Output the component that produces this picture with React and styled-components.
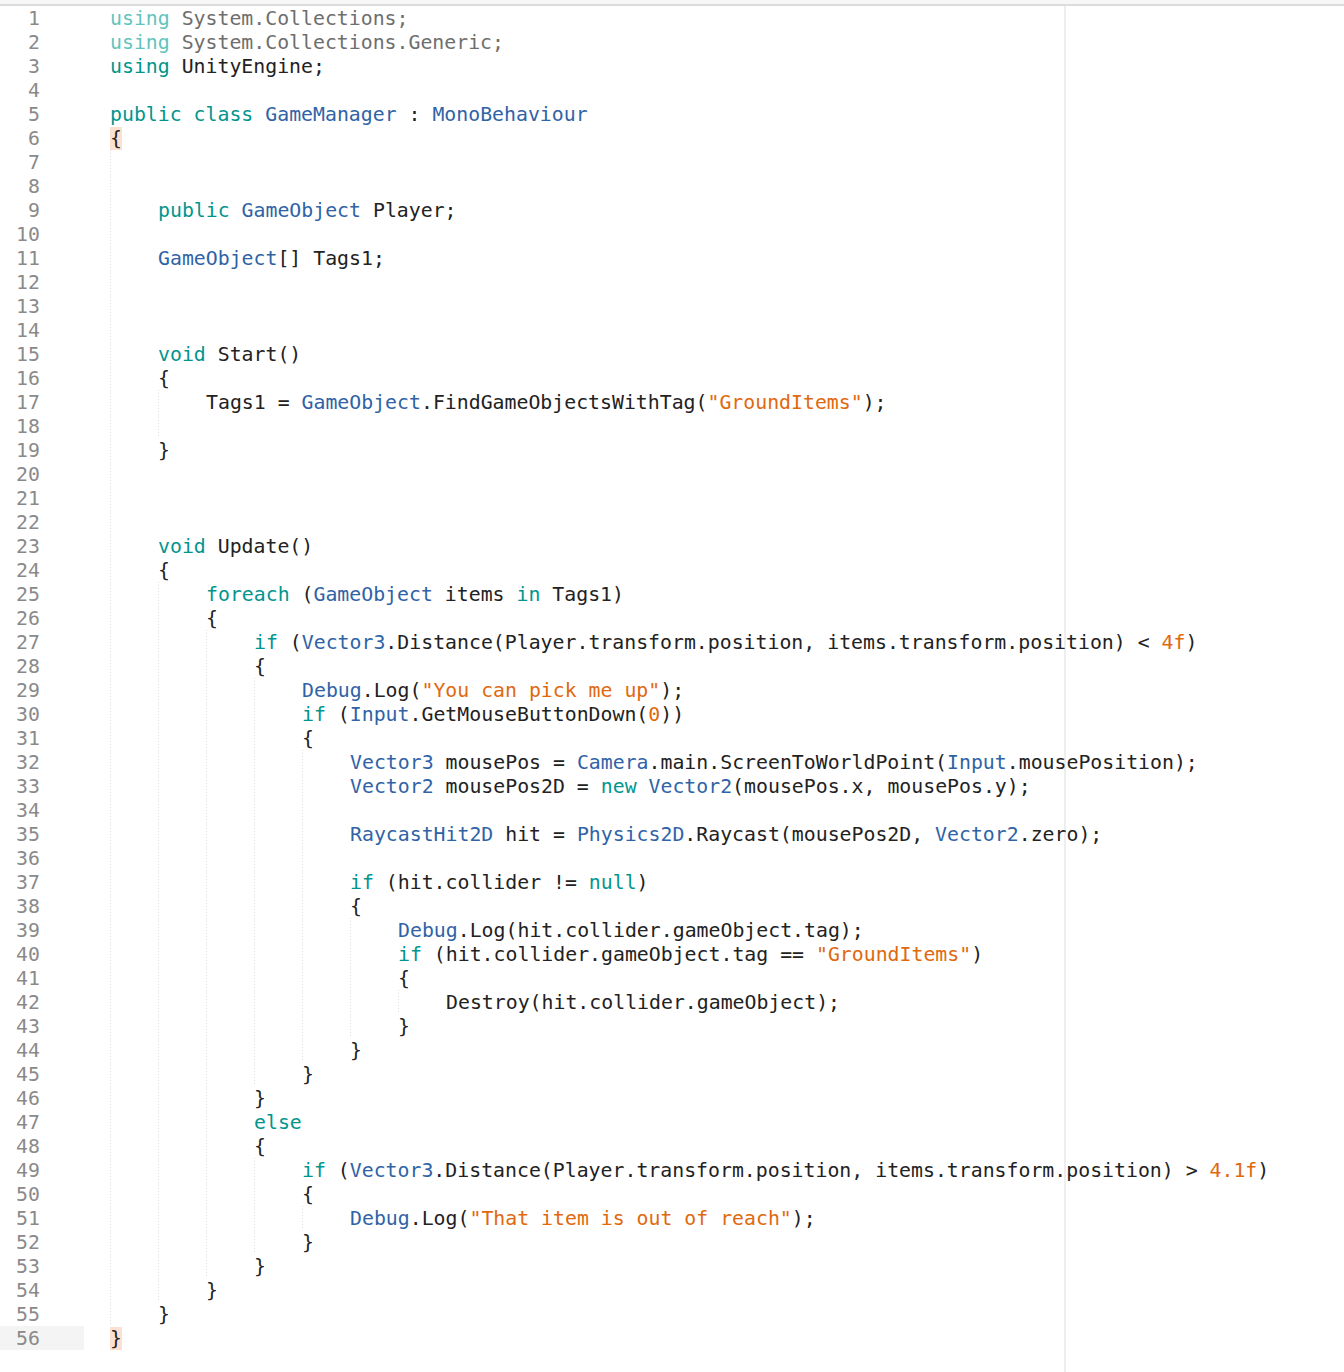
import React from 'react';
import styled, { createGlobalStyle } from 'styled-components';

const source = `using System.Collections;
using System.Collections.Generic;
using UnityEngine;

public class GameManager : MonoBehaviour
{


    public GameObject Player;

    GameObject[] Tags1;



    void Start()
    {
        Tags1 = GameObject.FindGameObjectsWithTag("GroundItems");

    }



    void Update()
    {
        foreach (GameObject items in Tags1)
        {
            if (Vector3.Distance(Player.transform.position, items.transform.position) < 4f)
            {
                Debug.Log("You can pick me up");
                if (Input.GetMouseButtonDown(0))
                {
                    Vector3 mousePos = Camera.main.ScreenToWorldPoint(Input.mousePosition);
                    Vector2 mousePos2D = new Vector2(mousePos.x, mousePos.y);

                    RaycastHit2D hit = Physics2D.Raycast(mousePos2D, Vector2.zero);

                    if (hit.collider != null)
                    {
                        Debug.Log(hit.collider.gameObject.tag);
                        if (hit.collider.gameObject.tag == "GroundItems")
                        {
                            Destroy(hit.collider.gameObject);
                        }
                    }
                }
            }
            else
            {
                if (Vector3.Distance(Player.transform.position, items.transform.position) > 4.1f)
                {
                    Debug.Log("That item is out of reach");
                }
            }
        }
    }
}`;

const keywords = ['using', 'public', 'class', 'void', 'foreach', 'in', 'if', 'else', 'new', 'null'];
const types = [
  'GameManager', 'MonoBehaviour', 'GameObject', 'Vector3', 'Vector2', 'Debug',
  'Input', 'Camera', 'RaycastHit2D', 'Physics2D',
];

// split a line into coloured tokens
const tokenize = (text, lineNo) => {
  if (lineNo <= 2) {
    return [
      { kind: 'kwDim', text: 'using' },
      { kind: 'dim', text: text.slice(5) },
    ];
  }
  const out = [];
  const re = /("[^"]*")|(\b\d+(?:\.\d+)?f?\b)|([A-Za-z_][A-Za-z0-9_]*)|([^A-Za-z0-9_"]+)/g;
  let m;
  while ((m = re.exec(text))) {
    if (m[1]) out.push({ kind: 'str', text: m[1] });
    else if (m[2]) out.push({ kind: 'str', text: m[2] });
    else if (m[3]) {
      const w = m[3];
      if (keywords.includes(w)) out.push({ kind: 'kw', text: w });
      else if (types.includes(w)) out.push({ kind: 'type', text: w });
      else out.push({ kind: 'plain', text: w });
    } else out.push({ kind: 'plain', text: m[4] });
  }
  return out;
};

// work out indent guides: columns of every open block
const buildLines = () => {
  const raw = source.split('\n');
  const stack = [];
  return raw.map((line, i) => {
    const trimmed = line.trim();
    const indent = line.length - line.trimStart().length;
    if (trimmed.startsWith('}')) stack.pop();
    const guides = [...stack];
    if (trimmed.startsWith('{')) stack.push(indent);
    const units = Math.max(Math.floor(indent / 4), guides.length);
    return {
      no: i + 1,
      units,
      guides,
      tokens: tokenize(line.slice(Math.min(units * 4, indent)), i + 1),
      matched: i === 5 || i === raw.length - 1,
    };
  });
};

const lines = buildLines();
const activeLine = lines.length;

const App = () => (
  <>
    <GlobalStyle />
    <Editor>
      <TopBar />
      <Body>
        <Gutter>
          {lines.map((l) => (
            <LineNumber key={l.no} $active={l.no === activeLine}>
              {l.no}
            </LineNumber>
          ))}
        </Gutter>
        <Code>
          {lines.map((l) => (
            <CodeLine key={l.no}>
              {Array.from({ length: l.units }).map((_, u) => (
                <Indent key={u} $guide={l.guides.includes(u * 4)} />
              ))}
              {l.tokens.map((t, k) =>
                l.matched && /^[{}]$/.test(t.text.trim()) ? (
                  <Match key={k}>{t.text}</Match>
                ) : (
                  <Token key={k} $kind={t.kind}>
                    {t.text}
                  </Token>
                )
              )}
            </CodeLine>
          ))}
        </Code>
      </Body>
    </Editor>
  </>
);

const GlobalStyle = createGlobalStyle`
  html, body {
    margin: 0;
    padding: 0;
    background: #ffffff;
  }
`;

const Editor = styled.div`
  min-height: 100vh;
  display: flex;
  flex-direction: column;
  font-family: 'DejaVu Sans Mono', 'Liberation Mono', monospace;
  font-size: 19.83px;
  line-height: 24px;
  color: #222222;
`;

const TopBar = styled.div`
  height: 4px;
  background: #f7f7f7;
  border-bottom: 2px solid #dcdcdc;
`;

const Body = styled.div`
  flex: 1;
  display: flex;
`;

const Gutter = styled.div`
  width: 84px;
  flex-shrink: 0;
`;

const LineNumber = styled.div`
  box-sizing: border-box;
  height: 24px;
  padding-top: 1px;
  padding-right: 44px;
  text-align: right;
  color: #8a8a8a;
  background: ${(p) => (p.$active ? '#f4f4f4' : 'transparent')};
`;

const Code = styled.div`
  flex: 1;
  padding-left: 26px;
  background: linear-gradient(
    to right,
    transparent 980px,
    #eeeeee 980px,
    #eeeeee 982px,
    transparent 982px
  );
`;

const CodeLine = styled.div`
  box-sizing: border-box;
  height: 24px;
  padding-top: 1px;
  white-space: pre;
`;

const Indent = styled.span`
  display: inline-block;
  width: 48px;
  height: 24px;
  margin-top: -1px;
  vertical-align: top;
  background-image: ${(p) =>
    p.$guide ? 'linear-gradient(to bottom, #dedede 50%, transparent 50%)' : 'none'};
  background-size: 1px 3px;
  background-repeat: repeat-y;
  background-position: 0 0;
`;

const tokenColors = {
  kw: '#02958e',
  kwDim: '#62c4bd',
  type: '#2f63a6',
  str: '#e0690e',
  dim: '#6e6e6e',
  plain: '#222222',
};

const Token = styled.span`
  color: ${(p) => tokenColors[p.$kind]};
`;

const Match = styled.span`
  background: #fce1d3;
  color: #222222;
`;

export default App;
